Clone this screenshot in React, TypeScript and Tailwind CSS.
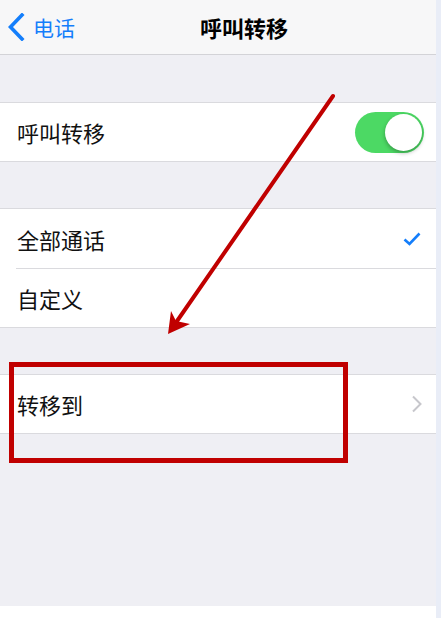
import React from "react";

const font = { fontFamily: '"Noto Sans CJK SC", "Noto Sans", sans-serif' };

function Chevron() {
  return (
    <svg width="12" height="18" viewBox="0 0 12 18" className="text-[#c7c7cc]">
      <path d="M2 1.5 L9.5 9 L2 16.5" fill="none" stroke="currentColor" strokeWidth="2" />
    </svg>
  );
}

export default function App() {
  return (
    <div className="relative flex w-[441px] h-[618px] overflow-hidden" style={font}>
      <div className="flex flex-col w-[436px] h-full bg-[#efeff4]">
        {/* nav */}
        <div className="relative flex items-center h-[55px] bg-[#f7f7f8] border-b border-[#d3d3d7]">
          <div className="flex items-center pl-[7px] text-[#147efb]">
            <svg width="18" height="28" viewBox="0 0 18 28">
              <path d="M15 2 L3.5 14 L15 26" fill="none" stroke="currentColor" strokeWidth="3.6" strokeLinecap="square" />
            </svg>
            <span className="ml-[8px] text-[21px] leading-none">电话</span>
          </div>
          <div className="absolute left-[200px] top-0 h-full flex items-center text-[22px] font-bold leading-none text-black">
            呼叫转移
          </div>
        </div>
        <div className="h-[47px]" />
        {/* toggle row */}
        <div className="bg-white border-y border-[#dadade]">
          <div className="flex items-center justify-between h-[58px] pl-[17px] pr-[12px]">
            <span className="text-[22px] leading-none text-[#111]">呼叫转移</span>
            <div className="flex items-center justify-end w-[69px] h-[41px] rounded-full bg-[#4cd964] p-[2px]">
              <div className="w-[37px] h-[37px] rounded-full bg-white shadow-[0_2px_4px_rgba(0,0,0,0.3)]" />
            </div>
          </div>
        </div>
        <div className="h-[46px]" />
        {/* options */}
        <div className="bg-white border-y border-[#dadade]">
          <div className="flex items-center justify-between h-[59px] pl-[17px] pr-[15px] ">
            <span className="text-[22px] leading-none text-[#111]">全部通话</span>
            <svg width="18" height="14" viewBox="0 0 18 14" className="text-[#147efb]">
              <path d="M1.5 7.5 L6.5 12 L16.5 1.5" fill="none" stroke="currentColor" strokeWidth="2.6" />
            </svg>
          </div>
          <div className="ml-[16px] h-px bg-[#dadade]" />
          <div className="flex items-center h-[58px] pl-[17px]">
            <span className="text-[22px] leading-none text-[#111]">自定义</span>
          </div>
        </div>
        <div className="h-[46px]" />
        <div className="bg-white border-y border-[#dadade]">
          <div className="flex items-center justify-between h-[58px] pl-[17px] pr-[13px]">
            <span className="text-[22px] leading-none text-[#111]">转移到</span>
            <Chevron />
          </div>
        </div>
        <div className="flex-1" />
        <div className="h-[12px] bg-white" />
      </div>
      <div className="w-[5px] h-full bg-[#e9edf7]" />

      {/* annotations */}
      <svg className="absolute left-0 top-0 pointer-events-none" width="441" height="618" viewBox="0 0 441 618">
        <line x1="333" y1="96" x2="175" y2="324" stroke="#c00000" strokeWidth="4" strokeLinecap="round" />
        <polygon points="168,334 171,311 176,321 190,324" fill="#c00000" />
        <rect x="11.5" y="364.5" width="334" height="96" fill="none" stroke="#c00000" strokeWidth="5" />
      </svg>
    </div>
  );
}
